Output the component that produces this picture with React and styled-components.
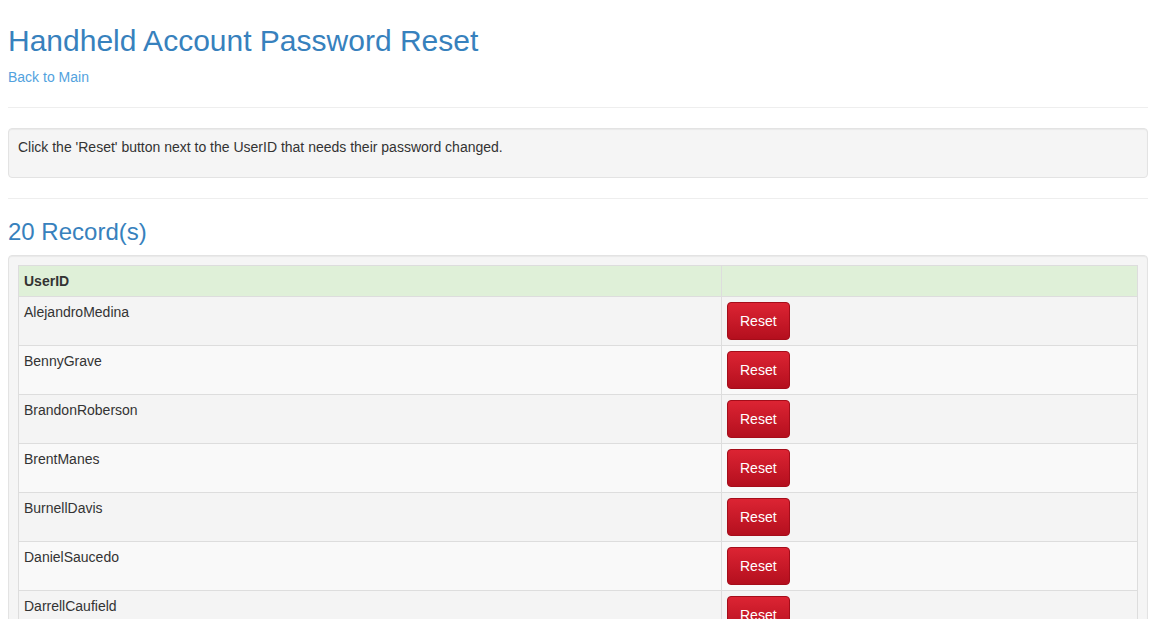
import React from 'react';
import styled, { createGlobalStyle } from 'styled-components';

const GlobalStyle = createGlobalStyle`
  body {
    margin: 0;
    background: #fff;
    font-family: "Liberation Sans", Arial, Helvetica, sans-serif;
    font-size: 14px;
    line-height: 1.42857;
    color: #333;
  }
`;

const users = [
  'AlejandroMedina',
  'BennyGrave',
  'BrandonRoberson',
  'BrentManes',
  'BurnellDavis',
  'DanielSaucedo',
  'DarrellCaufield',
  'DavidOrtega',
  'EddieLopez',
  'FrankMiller',
  'GeorgeHarris',
  'JamesCarter',
  'JoseRamirez',
  'KevinBrooks',
  'LarryWilson',
  'MarcusHill',
  'MichaelReyes',
  'RobertPrice',
  'TerryJohnson',
  'WillieThomas',
];

const Container = styled.div`
  width: 1140px;
  margin: 0 8px;
`;

const Title = styled.h1`
  margin: 24px 0 11px;
  font-size: 30px;
  font-weight: 400;
  line-height: 1.1;
  color: #3781bd;
`;

const BackLink = styled.a`
  display: inline-block;
  color: #52a2de;
  text-decoration: none;
  &:hover { text-decoration: underline; }
`;

const Divider = styled.hr`
  margin: ${(p) => (p.$tight ? '19px' : '20px')} 0 20px;
  border: 0;
  border-top: 1px solid #eee;
`;

const Well = styled.div`
  background: #f5f5f5;
  border: 1px solid #e3e3e3;
  border-radius: 4px;
  padding: 9px;
  box-shadow: inset 0 1px 1px rgba(0, 0, 0, 0.05);
  p { margin: 0 0 10px; }
`;

const Heading = styled.h3`
  margin: 18px 0 10px;
  font-size: 24px;
  font-weight: 400;
  line-height: 1.1;
  color: #3781bd;
`;

const Table = styled.table`
  width: 100%;
  border-collapse: collapse;
  border: 1px solid #ddd;
`;

const HeadCell = styled.th`
  background: #dff0d8;
  border: 1px solid #ddd;
  padding: 5px;
  text-align: left;
  font-weight: 700;
  line-height: 20px;
  width: ${(p) => p.$width || 'auto'};
`;

const Row = styled.tr`
  background: ${(p) => (p.$odd ? '#f4f4f4' : '#f9f9f9')};
`;

const Cell = styled.td`
  border: 1px solid #ddd;
  padding: 5px;
  vertical-align: top;
  line-height: 20px;
`;

const ResetButton = styled.button`
  display: inline-block;
  padding: 8px 12px;
  font-family: inherit;
  font-size: 14px;
  line-height: 20px;
  color: #fff;
  background: linear-gradient(to bottom, #dc2433 0%, #b40f1e 100%);
  border: 1px solid #a50d1a;
  border-radius: 4px;
  cursor: pointer;
  &:hover { background: #b40f1e; }
`;

export default function App() {
  return (
    <Container>
      <GlobalStyle />
      <Title>Handheld Account Password Reset</Title>
      <BackLink href="#">Back to Main</BackLink>
      <Divider $tight />
      <Well>
        <p>Click the 'Reset' button next to the UserID that needs their password changed.</p>
      </Well>
      <Divider />
      <Heading>{users.length} Record(s)</Heading>
      <Well>
        <Table>
          <thead>
            <tr>
              <HeadCell $width="692px">UserID</HeadCell>
              <HeadCell />
            </tr>
          </thead>
          <tbody>
            {users.map((u, i) => (
              <Row key={u} $odd={i % 2 === 0}>
                <Cell>{u}</Cell>
                <Cell>
                  <ResetButton type="button">Reset</ResetButton>
                </Cell>
              </Row>
            ))}
          </tbody>
        </Table>
      </Well>
    </Container>
  );
}
